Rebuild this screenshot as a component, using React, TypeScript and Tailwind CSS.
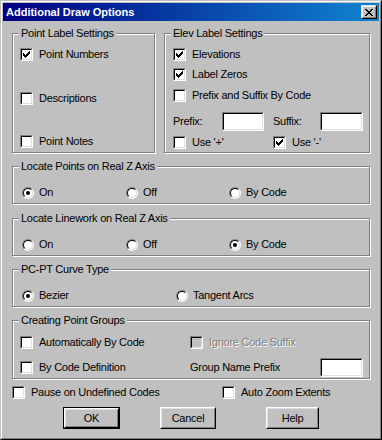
import type { ReactNode } from "react";

const CHECK = ["......X", ".....XX", "X...XXX", "XX.XXX.", "XXXXX..", ".XXX...", "..X...."];
const CLOSE = ["XX....XX", ".XX..XX.", "..XXXX..", "...XX...", "..XXXX..", ".XX..XX.", "XX....XX"];

function Bitmap({ rows, className }: { rows: string[]; className?: string }) {
  const w = rows[0].length;
  const h = rows.length;
  return (
    <svg width={w} height={h} viewBox={`0 0 ${w} ${h}`} shapeRendering="crispEdges" className={className}>
      {rows.flatMap((r, y) =>
        r.split("").map((c, x) => (c === "X" ? <rect key={`${x}-${y}`} x={x} y={y} width={1} height={1} fill="#000" /> : null))
      )}
    </svg>
  );
}

function Checkbox({ checked, disabled }: { checked?: boolean; disabled?: boolean }) {
  return (
    <div className="w-[13px] h-[13px] shrink-0 flex border border-t-[#808080] border-l-[#808080] border-r-white border-b-white">
      <div className={`flex-1 border border-t-black border-l-black border-r-[#dfdfdf] border-b-[#dfdfdf] ${disabled ? "bg-[#c0c0c0]" : "bg-white"}`}>
        {checked && <Bitmap rows={CHECK} className="ml-[1px] mt-[1px]" />}
      </div>
    </div>
  );
}

function Radio({ checked }: { checked?: boolean }) {
  return (
    <div className="w-[12px] h-[12px] shrink-0 flex rounded-full border border-t-[#808080] border-l-[#808080] border-r-white border-b-white">
      <div className="flex-1 flex items-center justify-center rounded-full border border-t-black border-l-black border-r-[#dfdfdf] border-b-[#dfdfdf] bg-white">
        {checked && <div className="w-[4px] h-[4px] rounded-full bg-black" />}
      </div>
    </div>
  );
}

function Check({ label, checked, disabled, className = "" }: { label: string; checked?: boolean; disabled?: boolean; className?: string }) {
  return (
    <div className={`flex items-center gap-[6px] h-[13px] ${className}`}>
      <Checkbox checked={checked} disabled={disabled} />
      <span className={`whitespace-nowrap ${disabled ? "text-[#808080] [text-shadow:1px_1px_0_#fff]" : ""}`}>{label}</span>
    </div>
  );
}

function Option({ label, checked, className = "" }: { label: string; checked?: boolean; className?: string }) {
  return (
    <div className={`flex items-center gap-[5px] h-[13px] ${className}`}>
      <Radio checked={checked} />
      <span className="whitespace-nowrap">{label}</span>
    </div>
  );
}

function Group({ title, className = "", children }: { title: string; className?: string; children: ReactNode }) {
  return (
    <div className={`relative border border-[#808080] shadow-[inset_1px_1px_0_#fff,1px_1px_0_#fff] ${className}`}>
      <span className="absolute -top-[7px] left-[6px] px-[2px] leading-[13px] bg-[#c0c0c0] whitespace-nowrap">{title}</span>
      {children}
    </div>
  );
}

function TextBox({ className = "" }: { className?: string }) {
  return (
    <div className={`shrink-0 flex border border-t-[#808080] border-l-[#808080] border-r-white border-b-white ${className}`}>
      <div className="flex-1 bg-white border border-t-black border-l-black border-r-[#dfdfdf] border-b-[#dfdfdf]" />
    </div>
  );
}

function Button({ label, isDefault, className = "" }: { label: string; isDefault?: boolean; className?: string }) {
  return (
    <div className={`h-[22px] shrink-0 flex ${isDefault ? "border border-black" : ""} ${className}`}>
      <div className="flex-1 flex border border-t-white border-l-white border-r-black border-b-black">
        <div className="flex-1 flex items-center justify-center border border-t-[#dfdfdf] border-l-[#dfdfdf] border-r-[#808080] border-b-[#808080]">
          {label}
        </div>
      </div>
    </div>
  );
}

export default function App() {
  return (
    <div className="w-[382px] h-[440px] bg-[#c0c0c0] text-black text-[11px] leading-[13px] tracking-[-0.25px] font-['Liberation_Sans',Arial,sans-serif] border border-t-[#c0c0c0] border-l-[#c0c0c0] border-r-black border-b-black select-none">
      <div className="h-full flex flex-col p-[1px] border border-t-white border-l-white border-r-[#808080] border-b-[#808080]">
        {/* caption */}
        <div className="h-[18px] shrink-0 flex items-center justify-between pl-[3px] pr-[2px] bg-[linear-gradient(to_right,#000080,#1084d0)]">
          <span className="text-white font-bold text-[11px] tracking-normal">Additional Draw Options</span>
          <div className="w-[16px] h-[14px] flex border border-t-[#dfdfdf] border-l-[#dfdfdf] border-r-black border-b-black">
            <div className="flex-1 flex items-center justify-center border border-t-white border-l-white border-r-[#808080] border-b-[#808080] bg-[#c0c0c0]">
              <Bitmap rows={CLOSE} className="mt-[1px]" />
            </div>
          </div>
        </div>

        <div className="flex flex-col pl-[9px] pt-[12px]">
          <div className="flex gap-[9px]">
            <Group title="Point Label Settings" className="w-[143px] h-[120px]">
              <div className="flex flex-col pl-[7px] pt-[14px]">
                <Check label="Point Numbers" checked />
                <Check label="Descriptions" className="mt-[31px]" />
                <Check label="Point Notes" className="mt-[30px]" />
              </div>
            </Group>
            <Group title="Elev Label Settings" className="w-[206px] h-[120px]">
              <div className="flex flex-col pl-[8px] pt-[14px]">
                <Check label="Elevations" checked />
                <Check label="Label Zeros" checked className="mt-[7px]" />
                <Check label="Prefix and Suffix By Code" className="mt-[8px]" />
                <div className="flex items-center mt-[10px] h-[19px]">
                  <span className="w-[49px]">Prefix:</span>
                  <TextBox className="w-[42px] h-[19px]" />
                  <span className="w-[47px] ml-[9px]">Suffix:</span>
                  <TextBox className="w-[43px] h-[19px]" />
                </div>
                <div className="flex mt-[5px]">
                  <Check label={"Use '+'"} className="w-[100px]" />
                  <Check label={"Use '-'"} checked />
                </div>
              </div>
            </Group>
          </div>

          <Group title="Locate Points on Real Z Axis" className="w-[358px] h-[38px] mt-[13px]">
            <div className="flex pl-[9px] pt-[19px]">
              <Option label="On" checked className="w-[104px]" />
              <Option label="Off" className="w-[103px]" />
              <Option label="By Code" />
            </div>
          </Group>

          <Group title="Locate Linework on Real Z Axis" className="w-[358px] h-[38px] mt-[14px]">
            <div className="flex pl-[9px] pt-[19px]">
              <Option label="On" className="w-[104px]" />
              <Option label="Off" className="w-[103px]" />
              <Option label="By Code" checked />
            </div>
          </Group>

          <Group title="PC-PT Curve Type" className="w-[358px] h-[38px] mt-[13px]">
            <div className="flex pl-[9px] pt-[19px]">
              <Option label="Bezier" checked className="w-[154px]" />
              <Option label="Tangent Arcs" />
            </div>
          </Group>

          <Group title="Creating Point Groups" className="w-[358px] h-[59px] mt-[13px]">
            <div className="flex flex-col pl-[7px] pt-[15px]">
              <div className="flex">
                <Check label="Automatically By Code" className="w-[170px]" />
                <Check label="Ignore Code Suffix" disabled />
              </div>
              <div className="flex items-center mt-[12px] h-[13px]">
                <Check label="By Code Definition" className="w-[170px]" />
                <span className="w-[130px]">Group Name Prefix</span>
                <TextBox className="w-[43px] h-[19px]" />
              </div>
            </div>
          </Group>

          <div className="flex mt-[7px]">
            <Check label="Pause on Undefined Codes" className="w-[210px]" />
            <Check label="Auto Zoom Extents" />
          </div>

          <div className="flex mt-[8px] pl-[51px]">
            <Button label="OK" isDefault className="w-[57px]" />
            <Button label="Cancel" className="w-[56px] ml-[40px]" />
            <Button label="Help" className="w-[53px] ml-[50px]" />
          </div>
        </div>
      </div>
    </div>
  );
}
